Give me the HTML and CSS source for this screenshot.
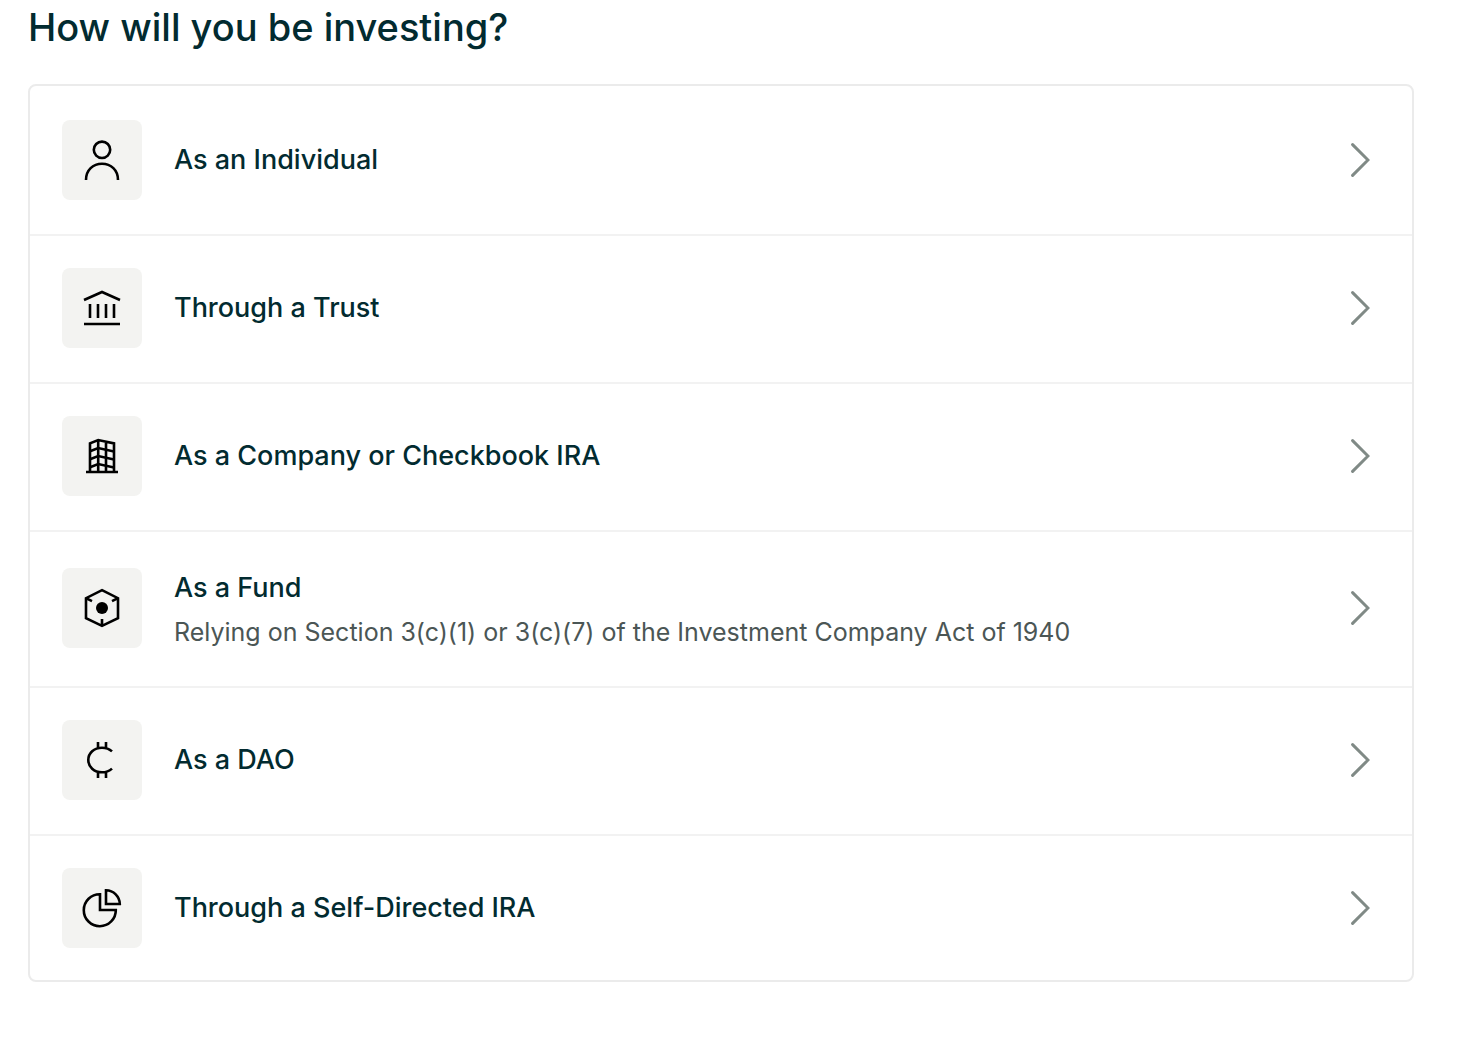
FILE: index.html
```html
<!DOCTYPE html>
<html lang="en">
<head>
  <meta charset="UTF-8">
  <meta name="viewport" content="width=device-width, initial-scale=1.0">
  <title>How will you be investing?</title>
  <link rel="stylesheet" href="styles.css">
</head>
<body>
  <main class="container">
    <h1>How will you be investing?</h1>
    <ul class="options">
      <li>
        <a class="option" href="#individual">
          <span class="icon">
            <svg viewBox="0 0 40 40" aria-hidden="true">
              <circle cx="20" cy="9.8" r="8.2"/>
              <path d="M4 40C4 30 11 23.8 20 23.8S36 30 36 40"/>
            </svg>
          </span>
          <span class="text"><span class="title">As an Individual</span></span>
          <svg class="chevron" viewBox="0 0 20 36" aria-hidden="true"><path d="M2.6 2.600l15.400 15.400L2.6 33.400"/></svg>
        </a>
      </li>
      <li>
        <a class="option" href="#trust">
          <span class="icon">
            <svg viewBox="0 0 40 40" aria-hidden="true">
              <path d="M2 12L20 4l18 8M8 16v14M16 16v14M24 16v14M32 16v14M2 36h36"/>
            </svg>
          </span>
          <span class="text"><span class="title">Through a Trust</span></span>
          <svg class="chevron" viewBox="0 0 20 36" aria-hidden="true"><path d="M2.6 2.6L18 18 2.6 33.4"/></svg>
        </a>
      </li>
      <li>
        <a class="option" href="#company">
          <span class="icon">
            <svg viewBox="0 0 40 40" aria-hidden="true">
              <path d="M8 36V7.4L16.2 4 32 7.4V36M16.2 4v32M24 5.8V36M4 36h32"/>
              <path d="M8 15.2l8.2-3.2L32 15.4M8 23.2l8.2-3.2L32 23.4M8 31.2l8.2-3.2L32 31.4"/>
            </svg>
          </span>
          <span class="text"><span class="title">As a Company or Checkbook IRA</span></span>
          <svg class="chevron" viewBox="0 0 20 36" aria-hidden="true"><path d="M2.6 2.6L18 18 2.6 33.4"/></svg>
        </a>
      </li>
      <li>
        <a class="option" href="#fund">
          <span class="icon">
            <svg viewBox="0 0 40 40" aria-hidden="true">
              <path d="M20 2.2l16 8v20l-16 7.6-16-7.6v-20zM4 10.200l6 3M36 10.200l-6 3M20 37.800V31"/>
              <circle class="dot" cx="20" cy="20" r="6"/>
            </svg>
          </span>
          <span class="text">
            <span class="title">As a Fund</span>
            <span class="note">Relying on Section 3(c)(1) or 3(c)(7) of the Investment Company Act of 1940</span>
          </span>
          <svg class="chevron" viewBox="0 0 20 36" aria-hidden="true"><path d="M2.6 2.6L18 18 2.6 33.4"/></svg>
        </a>
      </li>
      <li>
        <a class="option" href="#dao">
          <span class="icon">
            <svg viewBox="0 0 40 40" aria-hidden="true">
              <path d="M30 11.4C27.4 9 24 7.7 20 7.7 12 7.7 6.3 13 6.3 20S12 32.3 20 32.3c4 0 7.4-1.3 10-3.7M16 2v6M24 2v6M16 32v6M24 32v6"/>
            </svg>
          </span>
          <span class="text"><span class="title">As a DAO</span></span>
          <svg class="chevron" viewBox="0 0 20 36" aria-hidden="true"><path d="M2.6 2.6L18 18 2.6 33.4"/></svg>
        </a>
      </li>
      <li>
        <a class="option" href="#self-directed-ira">
          <span class="icon">
            <svg viewBox="0 0 40 40" aria-hidden="true">
              <path d="M18 6.2V22h15.8A16 16 0 1 1 18 6.2zM24 2.2V16h13.8A14 14 0 0 0 24 2.2z"/>
            </svg>
          </span>
          <span class="text"><span class="title">Through a Self-Directed IRA</span></span>
          <svg class="chevron" viewBox="0 0 20 36" aria-hidden="true"><path d="M2.6 2.6L18 18 2.6 33.4"/></svg>
        </a>
      </li>
    </ul>
  </main>
</body>
</html>
```
FILE: styles.css
```css
* { box-sizing: border-box; }
body { font-family: Inter, "Liberation Sans", sans-serif; background: #fff; color: #022b30; margin: 0; }
.container { padding: 4px 68px 32px 28px; }
h1 { margin: 0 0 34px; font-size: 38px; line-height: 46px; font-weight: 500; }

.options { list-style: none; margin: 0; padding: 2px 0 0; border: 2px solid #ebebeb; border-radius: 8px; }
.options li { border-bottom: 2px solid #f2f2f2; }
.options li:last-child { border-bottom: none; }
.option { display: flex; align-items: center; gap: 32px; padding: 32px 42px 34px 32px; color: inherit; text-decoration: none; }
.options li:last-child .option { padding-bottom: 32px; }

.icon { display: flex; align-items: center; justify-content: center; flex: none; width: 80px; height: 80px; background: #f3f3f1; border-radius: 8px; }
.icon svg { width: 40px; height: 40px; fill: none; stroke: #000; stroke-width: 2.6; }
.icon .dot { fill: #000; stroke: none; }

.text { flex: 1; display: flex; flex-direction: column; }
.title { font-size: 27px; line-height: 48px; font-weight: 500; }
.note { font-size: 25px; line-height: 40px; color: #4b5655; }

.chevron { flex: none; width: 20px; height: 36px; fill: none; stroke: #808a86; stroke-width: 3; stroke-linecap: round; }
```
